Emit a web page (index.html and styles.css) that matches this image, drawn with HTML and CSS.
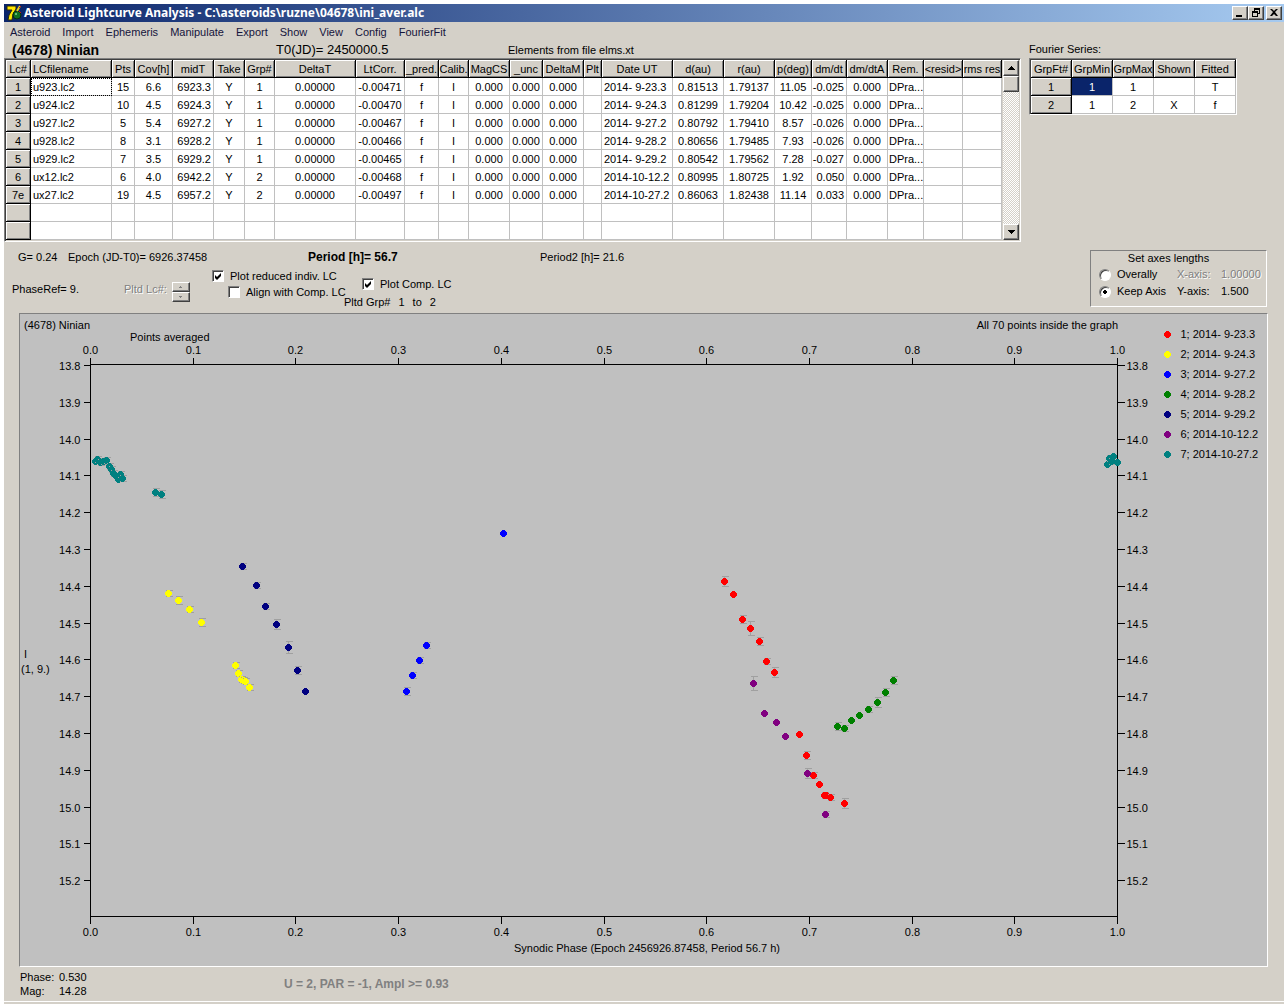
FILE: index.html
```html
<!DOCTYPE html>
<html lang="en">
<head>
    <meta charset="UTF-8">
    <meta name="viewport" content="width=device-width, initial-scale=1.0">
    <title>Asteroid Lightcurve Analysis</title>
    <link rel="stylesheet" href="styles.css">
</head>
<body>
    <header class="title-bar">
        <svg class="app-icon" width="16" height="16" viewBox="0 0 16 16" aria-hidden="true">
            <path d="M1 1h9v3L7 9l-1 6H2l1-5 3-5H1z" fill="#ffe600" stroke="#2a2a10"/>
            <circle cx="11" cy="10" r="4" fill="#107020" stroke="#0a2a10"/>
            <circle cx="10" cy="9" r="1" fill="#7fd08f"/>
            <path d="M11 6l3-5" stroke="#e8d020" stroke-width="2"/>
            <path d="M13 3l2-2M13 6l2 2" stroke="#c02010"/>
        </svg>
        <h1>Asteroid Lightcurve Analysis - C:\asteroids\ruzne\04678\ini_aver.alc</h1>
        <div class="window-buttons">
            <button type="button" aria-label="Minimize"><svg width="12" height="10" viewBox="0 0 12 10"><path d="M2 7h6v2H2z"/></svg></button>
            <button type="button" aria-label="Restore"><svg width="12" height="10" viewBox="0 0 12 10"><path d="M4 0h6v6H8V5h1V2H5v1H4zM2 3h6v6H2zM3 5v3h4V5z" fill-rule="evenodd"/></svg></button>
            <button type="button" class="close" aria-label="Close"><svg width="12" height="10" viewBox="0 0 12 10"><path d="M2 1h2l2 2 2-2h2L7 4l3 4H8L6 6 4 8H2l3-4z"/></svg></button>
        </div>
    </header>

    <nav class="menu">
        <button type="button">Asteroid</button>
        <button type="button">Import</button>
        <button type="button">Ephemeris</button>
        <button type="button">Manipulate</button>
        <button type="button">Export</button>
        <button type="button">Show</button>
        <button type="button">View</button>
        <button type="button">Config</button>
        <button type="button">FourierFit</button>
    </nav>

    <main>
        <section class="tables">
            <div class="lightcurves">
                <div class="object-info">
                    <h2>(4678) Ninian</h2>
                    <span class="epoch-zero">T0(JD)= 2450000.5</span>
                    <span>Elements from file elms.xt</span>
                </div>
                <div class="sunken grid-box">
                    <table class="grid" id="lc-table">
                        <colgroup>
                            <col class="w25"><col class="w81"><col class="w23"><col class="w38"><col class="w41"><col class="w31">
                            <col class="w30"><col class="w81"><col class="w49"><col class="w34"><col class="w30"><col class="w41">
                            <col class="w33"><col class="w41"><col class="w18"><col class="w71"><col class="w51"><col class="w51">
                            <col class="w37"><col class="w35"><col class="w41"><col class="w36"><col class="w39"><col class="w39">
                        </colgroup>
                        <thead>
                            <tr>
                                <th>Lc#</th><th class="left">LCfilename</th><th>Pts</th><th>Cov[h]</th><th>midT</th><th>Take</th>
                                <th>Grp#</th><th>DeltaT</th><th>LtCorr.</th><th>_pred.</th><th>Calib.</th><th>MagCS</th>
                                <th>_unc</th><th>DeltaM</th><th>Plt</th><th>Date UT</th><th>d(au)</th><th>r(au)</th>
                                <th>p(deg)</th><th>dm/dt</th><th>dm/dtA</th><th>Rem.</th><th>&lt;resid&gt;</th><th>rms res</th>
                            </tr>
                        </thead>
                        <tbody></tbody>
                    </table>
                    <div class="scrollbar">
                        <button type="button" aria-label="Scroll up"><svg width="7" height="4" viewBox="0 0 7 4"><path d="M3 0h1v1h1v1h1v1h1v1H0V3h1V2h1V1h1z"/></svg></button>
                        <div class="thumb"></div>
                        <button type="button" class="down" aria-label="Scroll down"><svg width="7" height="4" viewBox="0 0 7 4"><path d="M0 0h7v1H6v1H5v1H4v1H3V3H2V2H1V1H0z"/></svg></button>
                    </div>
                </div>
            </div>

            <div class="fourier">
                <div class="fourier-title">Fourier Series:</div>
                <div class="sunken">
                    <table class="grid">
                        <colgroup><col class="w41"><col class="w41"><col class="w41"><col class="w41"><col class="w41"></colgroup>
                        <thead>
                            <tr><th>GrpFt#</th><th>GrpMin</th><th>GrpMax</th><th>Shown</th><th>Fitted</th></tr>
                        </thead>
                        <tbody>
                            <tr><th>1</th><td class="selected">1</td><td>1</td><td></td><td>T</td></tr>
                            <tr><th>2</th><td>1</td><td>2</td><td>X</td><td>f</td></tr>
                        </tbody>
                    </table>
                </div>
            </div>
        </section>

        <section class="settings">
            <div class="settings-main">
                <div class="periods">
                    <span class="slope">G= 0.24</span>
                    <span class="epoch">Epoch (JD-T0)= 6926.37458</span>
                    <strong class="period">Period [h]= 56.7</strong>
                    <span>Period2 [h]= 21.6</span>
                </div>
                <div class="options">
                    <span class="phase-ref">PhaseRef= 9.</span>
                    <div class="plotted">
                        <span class="disabled">Pltd Lc#:</span>
                        <div class="spinner">
                            <button type="button" disabled aria-label="Next lightcurve"><svg width="5" height="3" viewBox="0 0 5 3"><path d="M2 0h1v1h1v1H1V1h1z"/></svg></button>
                            <button type="button" disabled aria-label="Previous lightcurve"><svg width="5" height="3" viewBox="0 0 5 3"><path d="M1 0h3v1H3v1H2V1H1z"/></svg></button>
                        </div>
                    </div>
                    <div class="checks">
                        <label><input type="checkbox" checked>Plot reduced indiv. LC</label>
                        <label class="indent"><input type="checkbox">Align with Comp. LC</label>
                    </div>
                    <div class="comp">
                        <label><input type="checkbox" checked>Plot Comp. LC</label>
                        <div class="groups"><span>Pltd Grp#</span><span>1</span><span>to</span><span>2</span></div>
                    </div>
                </div>
            </div>

            <fieldset class="axes">
                <legend>Set axes lengths</legend>
                <div class="axes-grid">
                    <label><input type="radio" name="axes">Overally</label>
                    <span class="disabled">X-axis:</span>
                    <span class="disabled">1.00000</span>
                    <label><input type="radio" name="axes" checked>Keep Axis</label>
                    <span>Y-axis:</span>
                    <span>1.500</span>
                </div>
            </fieldset>
        </section>

        <section class="chart">
            <svg viewBox="0 0 1247 652" role="img" aria-label="Composite lightcurve">
                <text x="4" y="15">(4678) Ninian</text>
                <text x="110" y="27">Points averaged</text>
                <text x="1098" y="15" text-anchor="end">All 70 points inside the graph</text>
                <text x="4" y="344">I</text>
                <text x="1" y="359">(1, 9.)</text>
                <text x="494" y="638">Synodic Phase (Epoch 2456926.87458, Period 56.7 h)</text>
                <!-- plot area, 1027 x 552 -->
                <g id="plot" transform="translate(70.5 50.5)">
                    <rect class="axis" width="1027" height="552"/>
                </g>
                <g id="legend" transform="translate(1147.5 20.5)"></g>
            </svg>
        </section>

        <footer class="status">
            <dl>
                <dt>Phase:</dt><dd>0.530</dd>
                <dt>Mag:</dt><dd>14.28</dd>
            </dl>
            <strong>U = 2, PAR = -1, Ampl &gt;= 0.93</strong>
        </footer>
    </main>

    <script src="script.js"></script>
</body>
</html>
```

FILE: styles.css
```css
* {
    box-sizing: border-box;
}

body {
    margin: 0;
    min-height: 100vh;
    border: 4px solid #fff;
    border-bottom: 0;
    background-color: #d4d0c8;
    color: #000;
    font-family: "Liberation Sans", Arial, sans-serif;
    font-size: 11px;
    line-height: 14px;
}

h1, h2, dl, dd {
    margin: 0;
    padding: 0;
}

button {
    padding: 0;
    font-family: inherit;
    font-size: inherit;
    color: inherit;
}

/* Title bar */
.title-bar {
    display: flex;
    align-items: center;
    height: 18px;
    padding: 0 2px;
    background: linear-gradient(to right, #0a246a, #a6caf0);
}

.title-bar h1 {
    flex: 1;
    margin-left: 2px;
    color: #fff;
    font-family: "Noto Sans", Tahoma, sans-serif;
    font-size: 12px;
    line-height: 16px;
}

.window-buttons {
    display: flex;
}

.window-buttons button,
.scrollbar button,
.thumb,
.spinner button {
    display: flex;
    align-items: center;
    justify-content: center;
    background-color: #d4d0c8;
    border: 1px solid;
    border-color: #fff #404040 #404040 #fff;
    box-shadow: inset -1px -1px #808080;
}

.window-buttons button {
    width: 16px;
    height: 14px;
}

.window-buttons .close {
    margin-left: 2px;
}

.menu {
    display: flex;
    gap: 12px;
    height: 20px;
    padding: 0 6px;
}

.menu button {
    background: none;
    border: 0;
    color: #14143c;
}

/* Tables */
.tables {
    display: flex;
    gap: 8px;
}

.object-info {
    display: flex;
    align-items: center;
    height: 16px;
    padding-left: 8px;
}

.object-info h2 {
    width: 264px;
    font-size: 14px;
}

.epoch-zero {
    width: 232px;
    font-size: 13px;
}

.fourier-title {
    height: 16px;
}

.sunken {
    border: 1px solid;
    border-color: #808080 #fff #fff #808080;
    box-shadow: inset 1px 1px #404040;
    padding: 1px 0 0 1px;
}

.grid-box {
    display: flex;
    gap: 1px;
    padding: 1px;
}

.grid {
    table-layout: fixed;
    width: 0;
    border-spacing: 0;
}

.w18 { width: 18px; }
.w23 { width: 23px; }
.w25 { width: 25px; }
.w30 { width: 30px; }
.w31 { width: 31px; }
.w33 { width: 33px; }
.w34 { width: 34px; }
.w35 { width: 35px; }
.w36 { width: 36px; }
.w37 { width: 37px; }
.w38 { width: 38px; }
.w39 { width: 39px; }
.w41 { width: 41px; }
.w49 { width: 49px; }
.w51 { width: 51px; }
.w71 { width: 71px; }
.w81 { width: 81px; }

.grid th,
.grid td {
    height: 18px;
    padding: 0;
    overflow: hidden;
    font-weight: normal;
    line-height: 16px;
    text-align: center;
    white-space: nowrap;
}

.grid th {
    background-color: #d4d0c8;
    border-right: 1px solid #000;
    border-bottom: 1px solid #000;
    box-shadow: inset 1px 1px #fff, inset -1px -1px #808080;
}

.grid td {
    background-color: #fff;
    border-right: 1px solid #c0c0c0;
    border-bottom: 1px solid #c0c0c0;
}

.grid .left {
    padding-left: 2px;
    text-align: left;
}

.grid .right {
    padding-right: 2px;
    text-align: right;
}

.grid .tight {
    padding-left: 1px;
    text-align: left;
}

.grid .focused {
    outline: 1px dotted #000;
    outline-offset: -1px;
}

.grid .selected {
    background-color: #0a246a;
    color: #fff;
}

.scrollbar {
    display: flex;
    flex-direction: column;
    width: 16px;
    background: repeating-conic-gradient(#fff 0 25%, #d4d0c8 0 50%) 0 0 / 2px 2px;
}

.scrollbar button,
.thumb {
    height: 16px;
}

.scrollbar .down {
    margin-top: auto;
}

/* Settings between the tables and the chart */
.settings {
    display: flex;
    justify-content: space-between;
    height: 71px;
    padding: 8px 17px 6px 8px;
}

.periods {
    display: flex;
    padding-left: 6px;
}

.slope {
    width: 50px;
}

.epoch {
    width: 240px;
}

.period {
    width: 232px;
    font-size: 12px;
}

.options {
    display: flex;
    padding-top: 4px;
}

.phase-ref {
    width: 112px;
    padding-top: 14px;
}

.plotted {
    display: flex;
    gap: 5px;
    width: 88px;
    padding-top: 14px;
}

.disabled {
    color: #808080;
    text-shadow: 1px 1px #fff;
}

.spinner button {
    width: 18px;
    height: 10px;
    fill: #808080;
}

.settings label {
    display: flex;
    align-items: center;
    gap: 6px;
    height: 16px;
}

.checks {
    width: 132px;
}

.checks .indent {
    margin-left: 16px;
}

.checks label,
.comp label {
    white-space: nowrap;
}

.comp {
    padding-top: 8px;
}

.comp label {
    margin-left: 18px;
}

.groups {
    display: flex;
    gap: 8px;
    padding-top: 3px;
}

input {
    appearance: none;
    flex: none;
    width: 12px;
    height: 12px;
    margin: 0;
    background: #fff center no-repeat;
    border: 1px solid;
    border-color: #808080 #fff #fff #808080;
    box-shadow: inset 1px 1px #404040;
}

input[type="checkbox"]:checked {
    background-image: url("data:image/svg+xml,%3Csvg xmlns='http://www.w3.org/2000/svg' width='8' height='8'%3E%3Cpath d='M1 3l2 2 4-4v3L3 8 1 6z'/%3E%3C/svg%3E");
}

input[type="radio"] {
    border-radius: 50%;
}

input[type="radio"]:checked {
    background-image: radial-gradient(circle, #000 2px, transparent 2px);
}

.axes {
    width: 177px;
    height: 57px;
    margin: 0;
    padding: 0 0 0 8px;
    border: 1px solid;
    border-color: #808080 #fff #fff #808080;
}

.axes legend {
    float: left;
    width: 100%;
    padding: 0 28px 0 0;
    text-align: center;
}

.axes-grid {
    display: grid;
    grid-template-columns: 78px 44px auto;
    clear: both;
    padding-top: 1px;
    line-height: 17px;
}

.axes .axes-grid label {
    height: 17px;
}

/* Lightcurve chart */
.chart {
    margin: 0 16px 0 15px;
    border: 1px solid;
    border-color: #808080 #fff #fff #808080;
    background-color: #c0c0c0;
}

.chart svg {
    display: block;
    width: 100%;
    font-size: 11px;
}

.axis {
    fill: none;
    stroke: #000;
    shape-rendering: crispEdges;
}

.error-bar {
    fill: none;
    stroke: #a0a0a0;
    shape-rendering: crispEdges;
}

.dot {
    shape-rendering: crispEdges;
}

.red { fill: #f00; }
.yellow { fill: #ff0; }
.blue { fill: #00f; }
.green { fill: #008000; }
.navy { fill: #000080; }
.purple { fill: #800080; }
.teal { fill: #008080; }

/* Footer */
.status {
    display: flex;
    align-items: center;
    height: 35px;
    padding-left: 16px;
    border-bottom: 1px solid #fff;
}

.status dl {
    display: grid;
    grid-template-columns: 39px 225px;
}

.status strong {
    color: #808080;
    font-size: 12px;
}
```

FILE: script.js
```js
// one row per lightcurve, in the order of the table columns
const rows = [
    ['1', 'u923.lc2', '15', '6.6', '6923.3', 'Y', '1', '0.00000', '-0.00471', 'f', 'I', '0.000', '0.000', '0.000', '', '2014- 9-23.3', '0.81513', '1.79137', '11.05', '-0.025', '0.000', 'DPra...', '', ''],
    ['2', 'u924.lc2', '10', '4.5', '6924.3', 'Y', '1', '0.00000', '-0.00470', 'f', 'I', '0.000', '0.000', '0.000', '', '2014- 9-24.3', '0.81299', '1.79204', '10.42', '-0.025', '0.000', 'DPra...', '', ''],
    ['3', 'u927.lc2', '5', '5.4', '6927.2', 'Y', '1', '0.00000', '-0.00467', 'f', 'I', '0.000', '0.000', '0.000', '', '2014- 9-27.2', '0.80792', '1.79410', '8.57', '-0.026', '0.000', 'DPra...', '', ''],
    ['4', 'u928.lc2', '8', '3.1', '6928.2', 'Y', '1', '0.00000', '-0.00466', 'f', 'I', '0.000', '0.000', '0.000', '', '2014- 9-28.2', '0.80656', '1.79485', '7.93', '-0.026', '0.000', 'DPra...', '', ''],
    ['5', 'u929.lc2', '7', '3.5', '6929.2', 'Y', '1', '0.00000', '-0.00465', 'f', 'I', '0.000', '0.000', '0.000', '', '2014- 9-29.2', '0.80542', '1.79562', '7.28', '-0.027', '0.000', 'DPra...', '', ''],
    ['6', 'ux12.lc2', '6', '4.0', '6942.2', 'Y', '2', '0.00000', '-0.00468', 'f', 'I', '0.000', '0.000', '0.000', '', '2014-10-12.2', '0.80995', '1.80725', '1.92', '0.050', '0.000', 'DPra...', '', ''],
    ['7e', 'ux27.lc2', '19', '4.5', '6957.2', 'Y', '2', '0.00000', '-0.00497', 'f', 'I', '0.000', '0.000', '0.000', '', '2014-10-27.2', '0.86063', '1.82438', '11.14', '0.033', '0.000', 'DPra...', '', ''],
    new Array(24).fill(''),
    new Array(24).fill('')
];
const align = { 1: 'left', 4: 'right', 15: 'left', 19: 'right', 21: 'tight' };

const tbody = document.querySelector('#lc-table tbody');
rows.forEach((row, r) => {
    const tr = document.createElement('tr');
    row.forEach((value, c) => {
        const cell = document.createElement(c === 0 ? 'th' : 'td');
        cell.textContent = value;
        if (align[c]) cell.className = align[c];
        if (r === 0 && c === 1) cell.classList.add('focused');
        tr.appendChild(cell);
    });
    tbody.appendChild(tr);
});

// points are [x, y, half height of the error bar] inside the plot area
const series = [
    { color: 'red', label: '1; 2014- 9-23.3', points: [[634, 217, 5], [643, 230, 0], [652, 255, 4], [660, 264, 7], [669, 277, 4], [676, 297, 3], [684, 308, 5], [709, 370, 0], [716, 391, 4], [723, 411, 3], [729, 420, 0], [734, 431, 3], [736, 431, 0], [740, 433, 3], [754, 439, 5]] },
    { color: 'yellow', label: '2; 2014- 9-24.3', points: [[78, 229, 3], [88, 236, 4], [99, 245, 3], [111, 258, 4], [145, 301, 3], [148, 309, 3], [151, 315, 3], [153, 316, 3], [155, 317, 3], [159, 323, 3]] },
    { color: 'blue', label: '3; 2014- 9-27.2', points: [[316, 327, 4], [322, 311, 3], [329, 296, 3], [336, 281, 3], [413, 169, 0]] },
    { color: 'green', label: '4; 2014- 9-28.2', points: [[747, 362, 4], [754, 364, 3], [761, 356, 0], [769, 351, 0], [778, 345, 3], [787, 338, 5], [795, 328, 4], [803, 316, 4]] },
    { color: 'navy', label: '5; 2014- 9-29.2', points: [[152, 202, 3], [166, 221, 3], [175, 242, 3], [186, 260, 5], [198, 283, 6], [207, 306, 4], [215, 327, 0]] },
    { color: 'purple', label: '6; 2014-10-12.2', points: [[663, 319, 7], [674, 349, 0], [686, 358, 0], [695, 372, 0], [717, 409, 5], [735, 450, 3]] },
    { color: 'teal', label: '7; 2014-10-27.2', points: [[5, 97, 0], [7, 95, 3], [10, 98, 3], [13, 97, 3], [16, 96, 3], [19, 102, 3], [21, 105, 3], [23, 109, 3], [26, 112, 0], [28, 115, 0], [30, 110, 3], [32, 114, 3], [65, 128, 4], [71, 130, 4], [1017, 100, 0], [1019, 94, 3], [1021, 97, 3], [1023, 92, 0], [1027, 98, 0]] }
];

function add(parent, name, attrs, text) {
    const el = document.createElementNS('http://www.w3.org/2000/svg', name);
    for (const key in attrs) el.setAttribute(key, attrs[key]);
    if (text) el.textContent = text;
    parent.appendChild(el);
}

// seven pixel wide marker with stepped corners
function addDot(parent, x, y, color) {
    add(parent, 'path', { class: 'dot ' + color, transform: `translate(${x - 0.5} ${y - 0.5})`, d: 'M-1 -3h3v1h1v1h1v3h-1v1h-1v1h-3v-1h-1v-1h-1v-3h1v-1h1z' });
}

const plot = document.getElementById('plot');
const legend = document.getElementById('legend');

// phase axis, top and bottom
for (let i = 0; i <= 10; i++) {
    const x = Math.round(i * 102.7);
    const label = (i / 10).toFixed(1);
    add(plot, 'path', { class: 'axis', d: `M${x} -7V0M${x} 552v7` });
    add(plot, 'text', { x: x, y: -11, 'text-anchor': 'middle' }, label);
    add(plot, 'text', { x: x, y: 571, 'text-anchor': 'middle' }, label);
}

// magnitude axis, left and right
for (let i = 0; i <= 14; i++) {
    const y = Math.round(1 + i * 36.8);
    const label = (13.8 + i / 10).toFixed(1);
    add(plot, 'path', { class: 'axis', d: `M-7 ${y}H0M1027 ${y}h7` });
    add(plot, 'text', { x: -10, y: y + 4, 'text-anchor': 'end' }, label);
    add(plot, 'text', { x: 1036, y: y + 4 }, label);
}

series.forEach((s, i) => {
    s.points.forEach(([x, y, e]) => {
        if (e) add(plot, 'path', { class: 'error-bar', d: `M${x - 3} ${y - e}h7M${x - 3} ${y + e}h7M${x} ${y - e}v${2 * e}` });
        addDot(plot, x, y, s.color);
    });
    addDot(legend, 0, i * 20, s.color);
    add(legend, 'text', { x: 13, y: i * 20 + 3 }, s.label);
});
```
